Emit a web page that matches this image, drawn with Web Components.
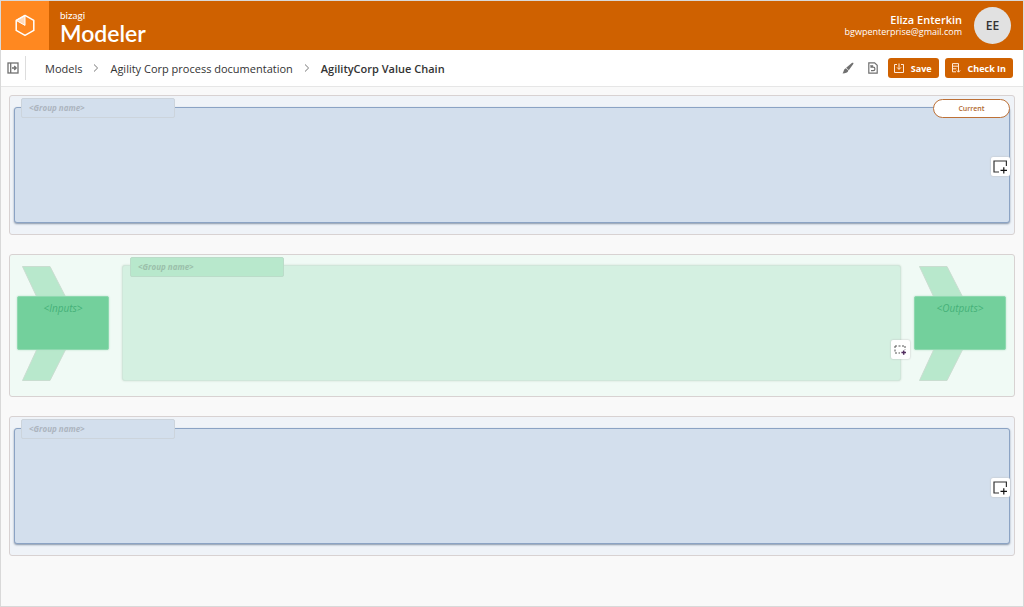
<!DOCTYPE html>
<html lang="en">
<head>
<meta charset="utf-8">
<title>AgilityCorp Value Chain - Modeler</title>
<style>
body {
	margin: 0;
	font-family: "Open Sans", "Noto Sans", sans-serif;
	color: #333;
}
</style>
</head>
<body>
<modeler-app>
	<app-header slot="header" user="Eliza Enterkin" email="bgwpenterprise@gmail.com" initials="EE"></app-header>
	<app-toolbar slot="toolbar"></app-toolbar>
	<value-band>
		<group-box name="&lt;Group name&gt;" add="solid" status="Current"></group-box>
	</value-band>
	<value-band kind="process">
		<flow-arrow>&lt;Inputs&gt;</flow-arrow>
		<group-box kind="process" name="&lt;Group name&gt;" add="dashed"></group-box>
		<flow-arrow>&lt;Outputs&gt;</flow-arrow>
	</value-band>
	<value-band>
		<group-box name="&lt;Group name&gt;" add="solid"></group-box>
	</value-band>
</modeler-app>
<script>
const icons = {
	cube: `<svg width="22" height="24" viewBox="0 0 22 24" fill="none" stroke="#fff" stroke-width="1.5" stroke-linejoin="round"><path d="M11 1.4 L19.8 6.4 V16.4 L11 21.4 L2.2 16.4 V6.4 Z"/><path d="M11 1.4 V11.4 L2.2 6.4 Z" fill="#fff" fill-opacity=".7" stroke-width="1"/></svg>`,
	panel: `<svg width="12" height="12" viewBox="0 0 12 12" fill="none" stroke="#707070" stroke-width="1.3"><rect x="1" y="1" width="10" height="10"/><path d="M3.7 1 V11 M5 6 H9.2 M7.2 4 L9.2 6 L7.2 8"/></svg>`,
	chevron: `<svg width="6" height="8" viewBox="0 0 6 8" fill="none" stroke="#777" stroke-width="1"><path d="M1 .5 L4.6 4 L1 7.5"/></svg>`,
	brush: `<svg width="12" height="12" viewBox="0 0 12 12" fill="#707070"><path d="M9.8 1 C11.2 .2 11.9 1 11.1 2.2 L6.8 8.2 L4.2 5.8 Z"/><path d="M3.8 6.2 L6.4 8.6 C5.8 11 3.4 11.3 .6 11.4 C1.8 10 1.4 7.4 3.8 6.2 Z"/></svg>`,
	history: `<svg width="10" height="12" viewBox="0 0 10 12" fill="none" stroke="#707070" stroke-width="1.2"><path d="M.8 .8 H6.6 L9.2 3.2 V11.2 H.8 Z"/><path d="M3 3 V5.2 H5.2 C7.5 5.2 7.5 8.6 5.2 8.6 H3 M3.2 5 L5 3.4"/></svg>`,
	save: `<svg width="10" height="10" viewBox="0 0 10 10" fill="none" stroke="#ffe9d8" stroke-width="1"><path d="M3 1.5 H.5 V9.5 H9.5 V1.5 H7 M5 .5 V6.4 M3 4.4 L5 6.4 L7 4.4"/></svg>`,
	checkin: `<svg width="10" height="10" viewBox="0 0 10 10" fill="none" stroke="#ffe9d8" stroke-width="1"><path d="M5 8.8 H1.5 V.6 H7.5 V5 M1.5 3.2 H7.5 M1.5 5.8 H5.4 M7.5 5 V9 M5.8 7.4 L7.5 9.2 L9.2 7.4"/></svg>`,
	solid: `<svg width="15" height="14" viewBox="0 0 15 14" fill="none" stroke="#333" stroke-width="1.2"><path d="M6 12 H1 V1 H13.4 V6"/><path d="M7.5 10.4 H14 M10.8 7.2 V13.6" stroke="#111"/></svg>`,
	dashed: `<svg width="13" height="10" viewBox="0 0 13 10" fill="none" stroke="#555"><path d="M1 1 H11.5 M1 1 V8 M11 1 V5 M1 8 H6" stroke-dasharray="2 1.5"/><path d="M7.4 7.6 H12 M9.7 5.4 V9.8" stroke="#532e60" stroke-width="1.5"/></svg>`
}

class BaseElement extends HTMLElement {
	constructor() {
		super()
		this.attachShadow({ mode: "open" })
	}
	connectedCallback() {
		this.shadowRoot.innerHTML = this.render()
	}
	// Attribute values are put into markup, so escape them
	attr(name) {
		return (this.getAttribute(name) || "").replace(/&/g, "&amp;").replace(/</g, "&lt;").replace(/>/g, "&gt;")
	}
}

customElements.define("modeler-app", class extends BaseElement {
	render() {
		return `
		<style>
		:host {
			display: flex;
			flex-direction: column;
			box-sizing: border-box;
			min-height: 100vh;
			border: 1px solid #d9d9d9;
			background: #f9f9f9;
		}
		main {
			flex: 1;
			display: flex;
			flex-direction: column;
			gap: 19px;
			padding: 8px;
		}
		</style>
		<slot name="header"></slot>
		<slot name="toolbar"></slot>
		<main><slot></slot></main>
		`
	}
})

customElements.define("app-header", class extends BaseElement {
	render() {
		return `
		<style>
		:host {
			display: block;
			background: #cf6100;
			color: #fff;
		}
		header {
			display: flex;
			align-items: center;
			height: 49px;
			padding-right: 12px;
		}
		.logo {
			display: grid;
			place-items: center;
			width: 48px;
			height: 49px;
			background: #ff8820;
		}
		.brand {
			flex: 1;
			padding-left: 11px;
			padding-top: 4px;
			font-family: Lato, sans-serif;
		}
		.brand small {
			display: block;
			font-size: 10px;
			line-height: 10px;
		}
		.brand strong {
			display: block;
			font-size: 23px;
			font-weight: 600;
			line-height: 26px;
		}
		.user {
			text-align: right;
			font-size: 9px;
			line-height: 12px;
			padding-right: 12px;
		}
		.user b {
			display: block;
			font-size: 11px;
			font-weight: 600;
		}
		.avatar {
			display: grid;
			place-items: center;
			width: 37px;
			height: 37px;
			border-radius: 50%;
			background: #e1e1e1;
			color: #333;
			font-size: 12px;
			font-weight: 600;
		}
		</style>
		<header>
			<div class="logo">${icons.cube}</div>
			<div class="brand"><small>bizagi</small><strong>Modeler</strong></div>
			<div class="user"><b>${this.attr("user")}</b>${this.attr("email")}</div>
			<div class="avatar">${this.attr("initials")}</div>
		</header>
		`
	}
})

customElements.define("app-toolbar", class extends BaseElement {
	render() {
		return `
		<style>
		:host {
			display: block;
			background: #fff;
			border-bottom: 1px solid #e6e6e6;
		}
		div, nav {
			display: flex;
			align-items: center;
		}
		.bar {
			height: 36px;
			padding: 0 10px 0 6px;
		}
		nav {
			flex: 1;
			gap: 11px;
			font-size: 11px;
			white-space: nowrap;
		}
		a {
			color: #333;
			text-decoration: none;
		}
		a[aria-current] {
			font-weight: 600;
		}
		button {
			display: grid;
			place-items: center;
			padding: 0;
			border: 0;
			background: none;
		}
		.toggle {
			width: 12px;
			height: 24px;
		}
		.side {
			padding-right: 6px;
			margin-right: 19px;
			border-right: 1px solid #ddd;
		}
		.tools {
			gap: 14px;
			margin-right: 10px;
		}
		.actions {
			gap: 6px;
		}
		</style>
		<div class="bar">
			<div class="side"><button class="toggle" aria-label="Toggle panel">${icons.panel}</button></div>
			<nav aria-label="Breadcrumb">
				<a href="#models">Models</a>${icons.chevron}
				<a href="#documentation">Agility Corp process documentation</a>${icons.chevron}
				<a href="#chain" aria-current="page">AgilityCorp Value Chain</a>
			</nav>
			<div class="tools">
				<button aria-label="Format">${icons.brush}</button>
				<button aria-label="History">${icons.history}</button>
			</div>
			<div class="actions">
				<action-button icon="save">Save</action-button>
				<action-button icon="checkin">Check In</action-button>
			</div>
		</div>
		`
	}
})

customElements.define("action-button", class extends BaseElement {
	render() {
		return `
		<style>
		:host {
			display: block;
		}
		button {
			display: flex;
			align-items: center;
			gap: 7px;
			height: 20px;
			padding: 0 7px 0 6px;
			border: 0;
			border-radius: 3px;
			background: #cf6100;
			color: #fff;
			font: 700 9px "Open Sans", sans-serif;
		}
		</style>
		<button>${icons[this.getAttribute("icon")]}<slot></slot></button>
		`
	}
})

customElements.define("value-band", class extends BaseElement {
	render() {
		return `
		<style>
		:host {
			display: flex;
			padding: 11px 4px;
			border: 1px solid #d8d2d2;
			border-radius: 3px;
			background: #eff3f8;
		}
		:host([kind="process"]) {
			gap: 13px;
			padding: 10px 8px 15px 7px;
			background: #f0faf5;
		}
		</style>
		<slot></slot>
		`
	}
})

customElements.define("group-box", class extends BaseElement {
	render() {
		const status = this.hasAttribute("status") ? `<button class="status">${this.attr("status")}</button>` : ""
		return `
		<style>
		:host {
			position: relative;
			display: block;
			flex: 1;
			box-sizing: border-box;
			height: 116px;
			border: 1px solid #8ba3c4;
			border-radius: 3px;
			background: #d3dfed;
			box-shadow: 0 1px 2px #8795a8;
			--label: #d3dfed;
			--label-text: #adb5bf;
		}
		:host([kind="process"]) {
			border-color: #d0e6da;
			background: #d4f0e1;
			box-shadow: 0 0 2px #c9d8cf;
			--label: #b8e8cc;
			--label-text: #9bbfaa;
		}
		.name {
			position: absolute;
			top: -10px;
			left: 6px;
			box-sizing: border-box;
			width: 154px;
			height: 20px;
			padding-left: 7px;
			border: 1px solid #ccd4dc;
			border-radius: 2px;
			background: var(--label);
			color: var(--label-text);
			font-size: 8px;
			font-style: italic;
			font-weight: 700;
			line-height: 18px;
		}
		:host([kind="process"]) .name {
			top: -9px;
			left: 7px;
			border-color: #bbdcc9;
		}
		.status {
			position: absolute;
			top: -9px;
			right: -1px;
			width: 77px;
			height: 19px;
			padding: 0;
			border: 1px solid #bd7137;
			border-radius: 10px;
			background: #fff;
			color: #b0662c;
			font: 600 7px "Open Sans", sans-serif;
		}
		.add {
			position: absolute;
			top: 49px;
			right: -1px;
			display: grid;
			place-items: center;
			width: 19px;
			height: 19px;
			padding: 0;
			border: 0;
			border-radius: 2px;
			background: #fff;
			box-shadow: 0 0 2px #bbb;
		}
		:host([kind="process"]) .add {
			top: 74px;
			right: -10px;
		}
		</style>
		<div class="name">${this.attr("name")}</div>
		${status}
		<button class="add" aria-label="Add">${icons[this.getAttribute("add")]}</button>
		`
	}
})

// Chevron with a captioned box laid across it
customElements.define("flow-arrow", class extends BaseElement {
	render() {
		return `
		<style>
		:host {
			display: grid;
			align-items: center;
			width: 92px;
			height: 116px;
		}
		svg, div {
			grid-area: 1 / 1;
		}
		div {
			box-sizing: border-box;
			height: 54px;
			border: 1px solid #8fd9b0;
			border-radius: 2px;
			background: #73d09c;
			box-shadow: 0 0 2px #b4dcc5;
			color: #46b079;
			font-size: 10px;
			font-style: italic;
			line-height: 22px;
			text-align: center;
		}
		</style>
		<svg width="92" height="116" viewBox="0 0 92 116" fill="#b8e8cc" stroke="#c9ddd0"><path d="M5.5 1.5 H33 L62 58 L33 115.5 H5.5 L32 58 Z"/></svg>
		<div><slot></slot></div>
		`
	}
})
</script>
</body>
</html>
